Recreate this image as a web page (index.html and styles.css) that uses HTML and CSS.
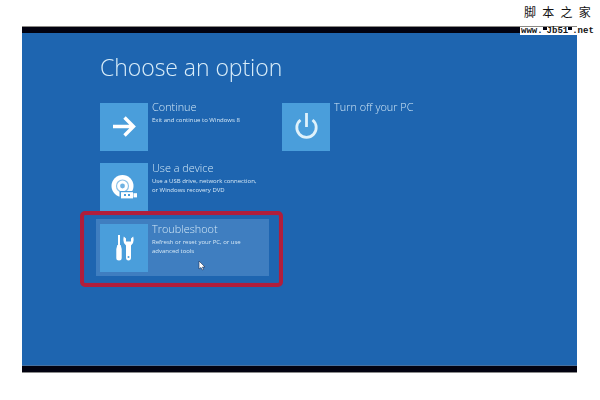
FILE: index.html
```html
<!DOCTYPE html>
<html lang="en">
<head>
<meta charset="utf-8">
<title>Choose an option</title>
<link rel="stylesheet" href="styles.css">
</head>
<body>
<div class="screen">
  <div class="bar bar-top"></div>
  <main class="main">
    <h1 class="title">Choose an option</h1>
    <div class="options">
      <div class="col">
        <div class="option">
          <div class="tile">
            <svg viewBox="0 0 48 48" width="48" height="48"><path d="M13 23.500H33M24.500 14.500L33.500 23.500L24.500 32.500" fill="none" stroke="#fff" stroke-width="3.400"/></svg>
          </div>
          <div class="copy">
            <div class="name">Continue</div>
            <div class="desc">Exit and continue to Windows 8</div>
          </div>
        </div>
        <div class="option">
          <div class="tile">
            <svg viewBox="0 0 48 48" width="48" height="48">
              <circle cx="22.500" cy="23" r="11" fill="#fff"/>
              <circle cx="22.500" cy="23" r="6" fill="none" stroke="#8cc2e8" stroke-width="1.200"/>
              <circle cx="22.500" cy="23" r="2.400" fill="#6fb2e2"/>
              <rect x="19.500" y="28" width="19" height="8.500" rx="1" fill="#4a9edb"/>
              <rect x="21" y="29.200" width="12" height="6.200" fill="#fff"/>
              <rect x="33.500" y="30.200" width="3.500" height="4.200" fill="#fff"/>
              <rect x="24" y="31" width="2" height="2" fill="#4a9edb"/>
              <rect x="28" y="31" width="2" height="2" fill="#4a9edb"/>
            </svg>
          </div>
          <div class="copy copy-low">
            <div class="name">Use a device</div>
            <div class="desc">Use a USB drive, network connection,<br>or Windows recovery DVD</div>
          </div>
        </div>
        <div class="marked">
          <div class="option option-active">
            <div class="tile">
              <svg viewBox="0 0 48 48" width="48" height="48">
                <path d="M19 11V21" stroke="#fff" stroke-width="2" fill="none"/>
                <path d="M17.300 21H20.700L21.700 25V34Q21.700 36.500 19 36.500Q16.300 36.500 16.300 34V25Z" fill="#fff"/>
                <path d="M23.800 12.500Q22.300 19 26 21.500V33.500Q26 36.500 28.500 36.500Q31 36.500 31 33.500V21.500Q34.700 19 33.200 12.500L31 14.500V17.500H26V14.500Z" fill="#fff"/>
                <circle cx="28.500" cy="33" r="1" fill="#4a9edb"/>
              </svg>
            </div>
            <div class="copy copy-low">
              <div class="name">Troubleshoot</div>
              <div class="desc">Refresh or reset your PC, or use<br>advanced tools</div>
            </div>
          </div>
          <svg class="cursor" viewBox="0 0 8 11" width="8" height="11"><path d="M1 1V9L3 7.500L4.500 10L5.500 9.500L4.500 7H7Z" fill="#fff" stroke="#1c2f55" stroke-width=".6"/></svg>
        </div>
      </div>
      <div class="col">
        <div class="option">
          <div class="tile">
            <svg viewBox="0 0 48 48" width="48" height="48"><path d="M24.500 10V24" stroke="#dff2fb" stroke-width="2.800" fill="none"/><path d="M18.500 17A9.700 9.700 0 1 0 30.500 17" stroke="#dff2fb" stroke-width="2.800" fill="none"/></svg>
          </div>
          <div class="copy">
            <div class="name">Turn off your PC</div>
          </div>
        </div>
      </div>
    </div>
  </main>
  <div class="bar bar-bottom"></div>
</div>
<div class="mark">
  <div class="mark-cn">脚 本 之 家</div>
  <div class="mark-url">www.<span class="notch"></span>Jb51<span class="notch"></span>.net</div>
</div>
</body>
</html>
```
FILE: styles.css
```css
* { box-sizing: border-box; }
html, body { margin: 0; height: 100%; background: #fff; overflow: hidden; }
body { padding: 26px 0 0 22px; font-family: "Open Sans", "Liberation Sans", sans-serif; color: #fff; position: relative; }
.screen { width: 555px; height: 347px; display: flex; flex-direction: column; background: #1e65b0; }
.bar { background: #020210; flex: none; }
.bar-top { height: 7px; border-top: 1px solid #8c8a85; }
.bar-bottom { height: 7px; border-bottom: 1px solid #8a8a8a; box-shadow: 0 -1px 0 #47709f; }
.main { flex: 1; padding: 20px 0 0 78px; filter: blur(.35px); }
.title { margin: 0 0 21px; font-size: 23px; line-height: 29px; font-weight: 300; color: #d9edf9; letter-spacing: -.05px; }
.options { display: flex; }
.col { width: 182px; display: flex; flex-direction: column; gap: 12px; }
.option { display: flex; height: 48px; }
.tile { width: 48px; height: 48px; flex: none; background: #4a9edb; }
.tile svg { display: block; }
.copy { padding: 0 0 0 4px; }
.copy-low { padding-top: 1px; }
.name { font-size: 10.900px; line-height: 10px; margin-top: -1px; margin-bottom: 4px; font-weight: 300; color: #cfe6f6; white-space: nowrap; }
.desc { font-size: 6px; line-height: 8.500px; color: #d5e8f6; white-space: nowrap; }
.marked { position: relative; margin: -12px -14px 0 -20px; width: 203px; height: 76px; border: 4px solid #b01e3c; border-radius: 5px; padding: 4px 10px 0 12px; box-shadow: inset 0 0 0 1px #2a5fa8; }
.option-active { width: 173px; height: 57px; padding: 5px 0 0 4px; background: #3f7ec0; }
.cursor { position: absolute; left: 114px; bottom: 12px; }
.mark { position: absolute; left: 520px; top: 5px; width: 73px; }
.mark-cn { font-family: "Noto Sans CJK SC", sans-serif; font-size: 12px; line-height: 13px; color: #111; white-space: nowrap; padding-left: 4px; letter-spacing: 1.800px; margin-bottom: 9px; }
.mark-url { background: #fff; font-family: "Liberation Mono", monospace; font-size: 9px; font-weight: 700; line-height: 8px; height: 8px; color: #111; white-space: nowrap; padding-left: 1px; }
.notch { display: inline-block; vertical-align: top; width: 4px; height: 3px; background: #020210; }
```
